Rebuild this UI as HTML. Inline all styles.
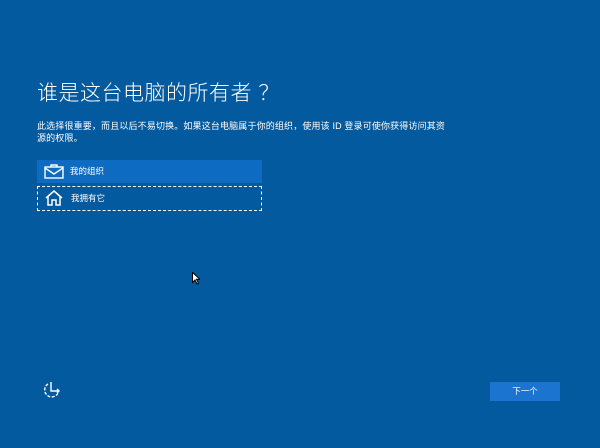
<!DOCTYPE html>
<html><head><meta charset="utf-8"><style>
body{margin:0;width:600px;height:448px;background:#045a9e;font-family:"Liberation Sans","Noto Sans CJK SC",sans-serif;color:#fff;position:relative;overflow:hidden}
.t{position:absolute;left:37px;top:77px;font-size:21px;letter-spacing:0.5px;font-weight:300}
.d{position:absolute;left:37px;top:120px;font-size:9px;letter-spacing:0.15px;line-height:12px;width:440px;white-space:nowrap}
.i{position:absolute;left:37px;width:225px;height:23px;font-size:8.5px;line-height:23px;box-sizing:border-box}
.i span{position:absolute;left:33px}
.i svg{position:absolute;left:7px;top:4px}
.b{position:absolute;left:490px;top:382px;width:70px;height:19px;background:#1a74d0;font-size:8.5px;line-height:19px;text-align:center}
</style></head><body>
<div class="t">谁是这台电脑的所有者 ？</div>
<div class="d">此选择很重要，而且以后不易切换。如果这台电脑属于你的组织，使用该 ID 登录可使你获得访问其资<br>源的权限。</div>
<div class="i" style="top:160px;background:#0d6cc2"><svg width="20" height="15" viewBox="0 0 20 15" fill="none" stroke="#fff" stroke-width="1.4"><rect x="1" y="3" width="18" height="11"/><path d="M7 3V1h6v2M1 4l9 6 9-6"/></svg><span>我的组织</span></div>
<div class="i" style="top:186px;height:25px;border:1px dashed #fff;line-height:23px"><svg width="18" height="16" viewBox="0 0 18 16" fill="none" stroke="#fff" stroke-width="1.5" style="top:3px"><path d="M1 8L9 1l8 7M3 6v9h4v-5h4v5h4V6"/></svg><span>我拥有它</span></div>
<svg style="position:absolute;left:42px;top:380px" width="20" height="20" viewBox="0 0 20 20" fill="none" stroke="#fff" stroke-width="1.4"><path d="M6 4A7 7 0 1 0 16 13" stroke-dasharray="3 1.5"/><path d="M9 2v9h8M15 9l2 2-2 2"/></svg>
<div class="b">下一个</div>
<svg style="position:absolute;left:192px;top:272px" width="8" height="13" viewBox="0 0 8 13"><path d="M0.5 0.5v10l2.5-2.5 2 4 1.5-.7-2-4h3.5z" fill="#fff" stroke="#000" stroke-width="1"/></svg>
</body></html>
